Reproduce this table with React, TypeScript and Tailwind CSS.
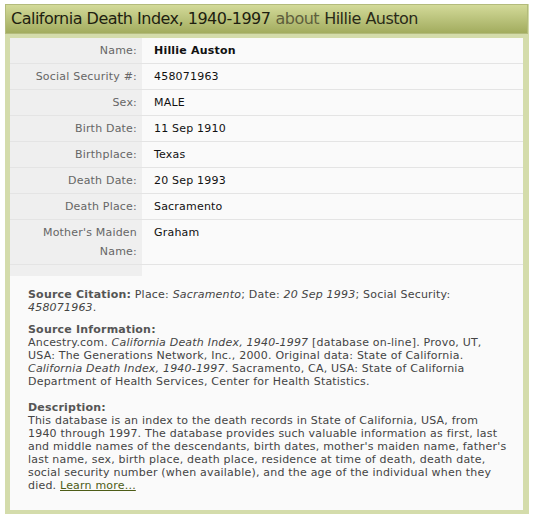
const rows: { label: string; value: string; bold?: boolean }[] = [
  { label: 'Name:', value: 'Hillie Auston', bold: true },
  { label: 'Social Security #:', value: '458071963' },
  { label: 'Sex:', value: 'MALE' },
  { label: 'Birth Date:', value: '11 Sep 1910' },
  { label: 'Birthplace:', value: 'Texas' },
  { label: 'Death Date:', value: '20 Sep 1993' },
  { label: 'Death Place:', value: 'Sacramento' },
  { label: "Mother's Maiden Name:", value: 'Graham' },
];

const App: React.FC = () => {
  return (
    <div className="w-[534px] h-[518px] bg-white pt-[4px] pl-[5px] font-['DejaVu_Sans',sans-serif]">
      <div className="w-[524px] bg-[#d4dcab] pb-[4px]">
        <div className="h-[30px] w-[523px] flex items-center pl-[5px] border border-[#b3bb7c] bg-gradient-to-b from-[#d3da99] to-[#a2ac5e] text-[16px] tracking-[-0.5px] text-[#1e1e10] whitespace-nowrap">
          <span>California Death Index, 1940-1997</span>
          <span className="ml-[5px] text-[#5e5e3c]">about</span>
          <span className="ml-[5px] text-[#2a2a18]">Hillie Auston</span>
        </div>
        <div className="mt-[4px] ml-[5px] w-[513px] bg-[#fafafa] text-[11px] leading-[13px] tracking-[0.2px]">
          <div className="flex flex-col">
            {rows.map((r) => (
              <div key={r.label} className="flex">
                <div className="w-[132px] shrink-0 bg-[#efefef] text-right text-[#666] pr-[5px] pl-2 py-[3px] leading-[19px] border-b border-[#e4e4e4]">
                  {r.label}
                </div>
                <div
                  className={
                    r.bold
                      ? 'flex-1 pl-[12px] py-[3px] leading-[19px] text-[#111] font-bold border-b border-[#e4e4e4]'
                      : 'flex-1 pl-[12px] py-[3px] leading-[19px] text-[#111] border-b border-[#e4e4e4]'
                  }
                >
                  {r.value}
                </div>
              </div>
            ))}
            <div className="flex h-[11px]">
              <div className="w-[132px] bg-[#efefef]" />
              <div className="flex-1" />
            </div>
          </div>
          <div className="pl-[18px] pr-[16px] pt-[12px] pb-[18px] text-[#444]">
            <p>
              <span className="font-bold text-[#555]">Source Citation:</span> Place: <i>Sacramento</i>; Date:{' '}
              <i>20 Sep 1993</i>; Social Security: <i>458071963</i>.
            </p>
            <p className="mt-[9px]">
              <span className="font-bold text-[#555]">Source Information:</span>
              <br />
              Ancestry.com. <i>California Death Index, 1940-1997</i> [database on-line]. Provo, UT, USA: The
              Generations Network, Inc., 2000. Original data: State of California. <i>California Death Index, 1940-1997</i>.
              Sacramento, CA, USA: State of California Department of Health Services, Center for Health Statistics.
            </p>
            <p className="mt-[13px]">
              <span className="font-bold text-[#555]">Description:</span>
              <br />
              This database is an index to the death records in State of California, USA, from 1940 through 1997. The
              database provides such valuable information as first, last and middle names of the descendants, birth
              dates, mother's maiden name, father's last name, sex, birth place, death place, residence at time of
              death, death date, social security number (when available), and the age of the individual when they
              died.{' '}
              <a href="#" className="text-[#4d5c17] underline">
                Learn more...
              </a>
            </p>
          </div>
        </div>
      </div>
    </div>
  );
};

export default App;
